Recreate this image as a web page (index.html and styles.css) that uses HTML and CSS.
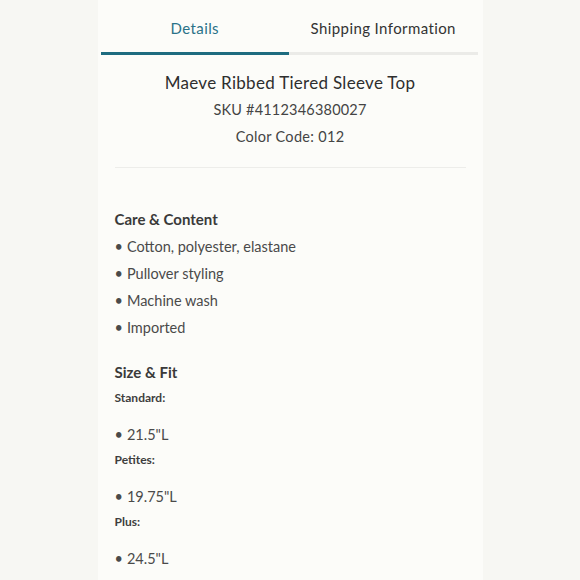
FILE: index.html
```html
<!DOCTYPE html>
<html lang="en">
<head>
<meta charset="utf-8">
<title>Details</title>
<link rel="stylesheet" href="styles.css">
</head>
<body>
<div class="panel">
  <div class="tabs">
    <div class="tab active">Details</div>
    <div class="tab">Shipping Information</div>
  </div>
  <div class="head">
    <div class="title">Maeve Ribbed Tiered Sleeve Top</div>
    <div class="meta">SKU #4112346380027</div>
    <div class="meta">Color Code: 012</div>
  </div>
  <div class="body">
    <h3 class="section">Care &amp; Content</h3>
    <ul class="list">
      <li>Cotton, polyester, elastane</li>
      <li>Pullover styling</li>
      <li>Machine wash</li>
      <li>Imported</li>
    </ul>
    <h3 class="section gap">Size &amp; Fit</h3>
    <div class="label">Standard:</div>
    <ul class="list"><li>21.5"L</li></ul>
    <div class="label">Petites:</div>
    <ul class="list"><li>19.75"L</li></ul>
    <div class="label">Plus:</div>
    <ul class="list"><li>24.5"L</li></ul>
  </div>
</div>
</body>
</html>
```
FILE: styles.css
```css
html, body {
  margin: 0;
  padding: 0;
}
body {
  background: #f7f7f3;
  font-family: Lato, "Open Sans", sans-serif;
  color: #444444;
}
.panel {
  width: 385px;
  margin: 0 auto;
  background: #fcfcf9;
  min-height: 580px;
}
.tabs {
  display: grid;
  grid-template-columns: 1fr 1fr;
  margin: 0 5px 0 3px;
}
.tab {
  text-align: center;
  font-size: 15px;
  line-height: 20px;
  padding: 18px 0 14px;
  border-bottom: 3px solid #ebebe8;
  color: #333333;
  letter-spacing: 0.4px;
}
.tab.active {
  color: #2a7288;
  border-bottom-color: #1e6c80;
}
.head {
  margin: 0 17px;
  padding: 14px 0 17px;
  border-bottom: 1px solid #ededea;
  text-align: center;
}
.title {
  font-size: 17px;
  line-height: 27px;
  color: #2e2e2e;
  letter-spacing: 0.3px;
}
.meta {
  font-size: 14.5px;
  line-height: 27px;
  color: #444444;
  letter-spacing: 0.2px;
}
.meta + .meta {
  letter-spacing: 0.3px;
}
.body {
  padding: 38px 17px 0;
}
.section {
  margin: 0;
  font-size: 15px;
  line-height: 27px;
  font-weight: 700;
  color: #3a3a3a;
}
.section.gap {
  margin-top: 18px;
}
.list {
  list-style: none;
  margin: 0;
  padding: 0;
}
.list li {
  font-size: 14.5px;
  line-height: 27px;
  color: #4a4a4a;
}
.list li::before {
  content: "\2022";
  margin-right: 4px;
}
.label {
  font-size: 12px;
  line-height: 20px;
  font-weight: 700;
  color: #3e3e3e;
  margin: 2px 0 13px;
}
```
